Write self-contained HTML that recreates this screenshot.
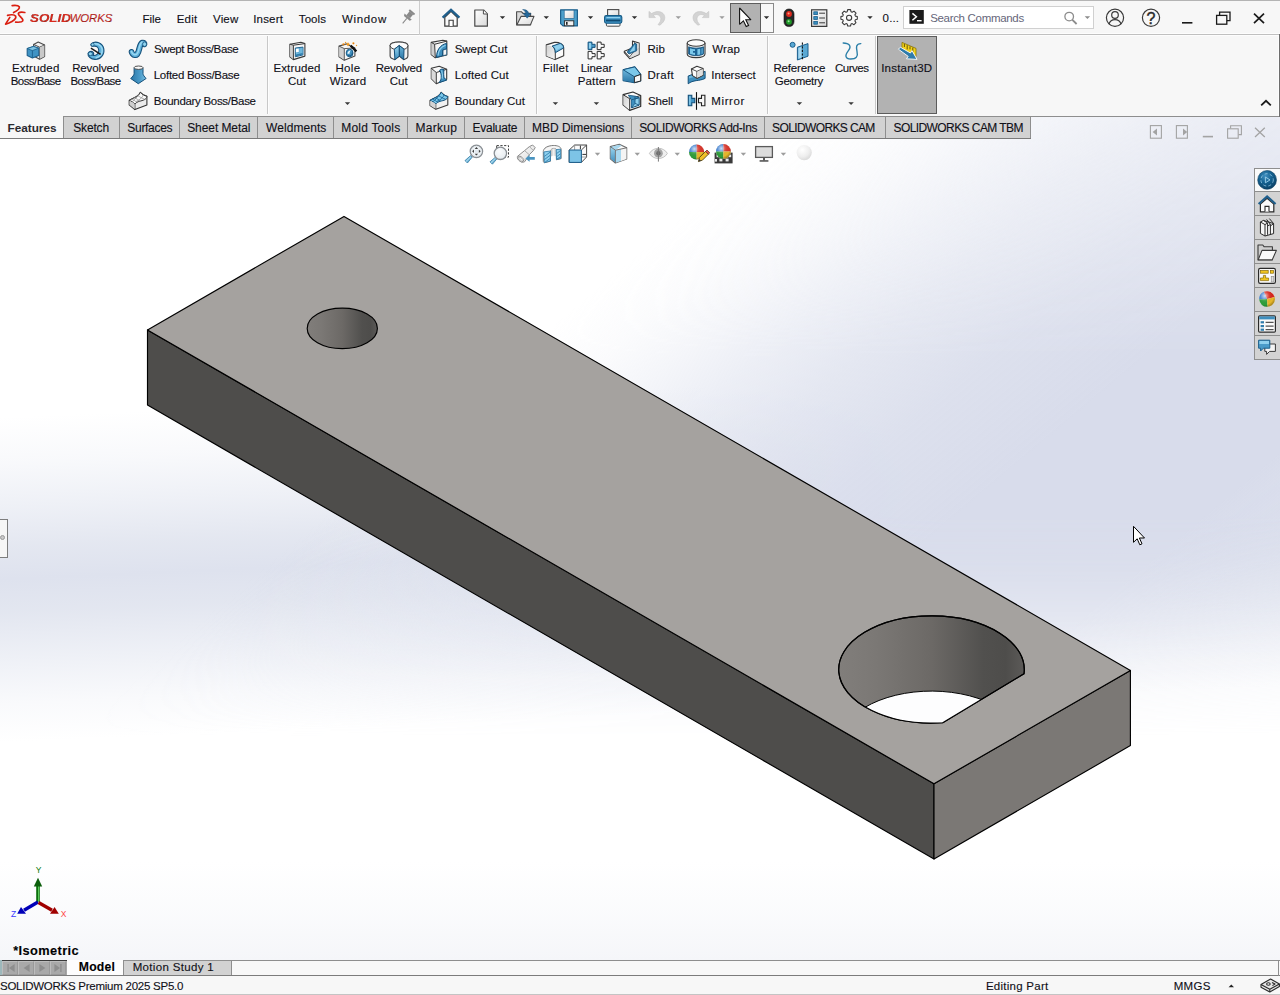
<!DOCTYPE html>
<html lang="en"><head><meta charset="utf-8"><title>SOLIDWORKS Premium 2025 SP5.0</title>
<style>
html,body{margin:0;padding:0}
body{width:1280px;height:995px;position:relative;overflow:hidden;background:#fff;
 font-family:"Liberation Sans",sans-serif;font-size:11.5px;color:#111}
.t{position:absolute;white-space:nowrap;line-height:14px;height:14px;color:#101018;-webkit-text-stroke:.12px #101018}
.a{position:absolute}
svg{position:absolute;overflow:visible}
#vp{position:absolute;left:0;top:117px;width:1280px;height:843px;overflow:hidden;background:#fff}
#bg1{position:absolute;left:0;top:0;width:1280px;height:843px;
 background:
  linear-gradient(to bottom, rgba(246,247,250,0) 745px, rgba(246,247,250,.55) 800px, rgba(245,246,249,1) 843px),
  linear-gradient(177.5deg, rgba(224,228,239,0) 300px, rgba(224,228,239,.22) 345px, rgba(224,228,239,.55) 390px, rgba(223,227,238,.85) 430px, rgba(222,226,238,1) 462px, rgba(223,227,238,.88) 495px, rgba(224,228,239,.55) 540px, rgba(224,228,239,.2) 585px, rgba(224,228,239,0) 625px),
  #fff}
#bg2{position:absolute;left:0;top:0;width:1280px;height:843px;
 background:linear-gradient(140deg, rgba(222,226,238,0) 515px, rgba(222,226,238,.12) 570px, rgba(222,226,238,.32) 620px, rgba(221,225,238,.54) 670px, rgba(220,224,237,.76) 735px, rgba(218,222,236,.93) 820px, rgba(216,220,235,1) 920px, rgba(216,220,235,1) 1080px, rgba(220,224,237,.8) 1200px, rgba(224,228,239,.6) 1300px);
 -webkit-mask-image:linear-gradient(to bottom, rgba(0,0,0,.62) 0px, rgba(0,0,0,.8) 120px, #000 240px, #000 400px, rgba(0,0,0,.6) 480px, rgba(0,0,0,.2) 560px, rgba(0,0,0,0) 620px);
 mask-image:linear-gradient(to bottom, rgba(0,0,0,.62) 0px, rgba(0,0,0,.8) 120px, #000 240px, #000 400px, rgba(0,0,0,.6) 480px, rgba(0,0,0,.2) 560px, rgba(0,0,0,0) 620px)}
#titlebar{left:0;top:0;width:1280px;height:34px;background:#f7f7f7;border-top:1px solid #b4b4b4;border-bottom:1px solid #fdfdfd;box-sizing:border-box}
#ribbon{left:0;top:34px;width:1280px;height:82px;background:#f7f7f7;border-top:1px solid #c0c0c0;box-sizing:border-box;box-shadow:inset 0 1px 0 #fdfdfd}
#ribline{left:0;top:116px;width:1280px;height:1px;background:#9a9a9a}
.vsep{position:absolute;width:1px;background:#c8c8c8;top:36px;height:78px;box-shadow:1px 0 0 #fdfdfd}
.tab{position:absolute;top:117px;height:21px;background:#d2d2d2;border-right:1px solid #9c9c9c;box-sizing:border-box}
#tabline{left:0;top:138px;width:1031px;height:1px;background:#7a7a7a}
.dd{position:absolute;width:0;height:0;border-left:3px solid transparent;border-right:3px solid transparent;border-top:3px solid #333}
.ddg{border-top-color:#9a9a9a}

</style></head>
<body>
<div id="vp">
<div id="bg1"></div><div id="bg2"></div>
<svg width="1280" height="995" viewBox="0 0 1280 995" style="left:0;top:-117px" shape-rendering="geometricPrecision">
<defs>
<linearGradient id="hg" x1="0" y1="0" x2="1" y2="0">
<stop offset="0" stop-color="#817e7b"/><stop offset=".2" stop-color="#7b7875"/><stop offset=".5" stop-color="#6c6966"/>
<stop offset=".78" stop-color="#51504e"/><stop offset=".9" stop-color="#4e4d4b"/><stop offset="1" stop-color="#5c5a58"/>
</linearGradient>
<clipPath id="dclip"><path d="M1024.0,673.8 A92.8,53.6 0 1 0 942.7,722.7 Z"/></clipPath>
</defs>
<g stroke="#000" stroke-width="1.15" stroke-linejoin="round">
<polygon points="147.5,329.9 934.0,783.8 934.0,859.0 147.5,405.1" fill="#4e4d4b"/>
<polygon points="934.0,783.8 1130.4,670.4 1130.4,745.6 934.0,859.0" fill="#7b7875"/>
<polygon points="344.0,216.4 1130.4,670.4 934.0,783.8 147.5,329.9" fill="#a5a29f"/>
<ellipse cx="342.3" cy="328.4" rx="35.1" ry="20.2" fill="url(#hg)"/>
<path d="M1024.0,673.8 A92.8,53.6 0 1 0 942.7,722.7 Z" fill="url(#hg)"/>
<g clip-path="url(#dclip)"><path d="M1024.0,749.0 A92.8,53.6 0 1 0 942.7,797.9 Z" fill="#fdfdfe" stroke-width="1"/></g>
<path d="M1024.0,673.8 A92.8,53.6 0 1 0 942.7,722.7 Z" fill="none"/>
</g>
<path d="M1133.5,526.3 L1133.5,542.3 L1137.2,538.8 L1139.8,544.8 L1142,543.8 L1139.4,538 L1144.5,538 Z" fill="#fff" stroke="#000" stroke-width="1" stroke-linejoin="miter" stroke-miterlimit="3"/>
<g>
<line x1="38" y1="902" x2="38" y2="886" stroke="#0b6e0b" stroke-width="3.6"/>
<line x1="38.6" y1="902" x2="38.6" y2="886" stroke="#5fd45f" stroke-width="1"/>
<polygon points="38,877.8 42.2,886.5 33.8,886.5" fill="#0b5e0b"/>
<line x1="38" y1="902" x2="24" y2="910.3" stroke="#0000b8" stroke-width="3.4"/>
<polygon points="17.2,913.8 21,907 26,913.8" fill="#0000b8"/>
<line x1="38.5" y1="902.5" x2="52" y2="910.3" stroke="#a00000" stroke-width="3.4"/>
<polygon points="58.8,913.8 54.6,907 50,913.8" fill="#a00000"/>
<text x="38.5" y="873" font-size="8.5" font-family="Liberation Sans, sans-serif" fill="#0a7a0a" text-anchor="middle">Y</text>
<text x="13.5" y="917" font-size="8.5" font-family="Liberation Sans, sans-serif" fill="#3a3aff" text-anchor="middle">Z</text>
<text x="63.6" y="917" font-size="8.5" font-family="Liberation Sans, sans-serif" fill="#ff4646" text-anchor="middle">X</text>
</g>
</svg>
</div>
<div class="a" id="titlebar"></div>
<div class="a" id="ribbon"></div>
<div class="a" style="left:419px;top:1px;width:1px;height:34px;background:#cdcdcd"></div>
<div class="a" style="left:730px;top:3px;width:31px;height:30px;background:#b2b2b2;border:1px solid #5c5c5c;box-sizing:border-box"></div>
<div class="a" style="left:761px;top:3px;width:13px;height:30px;background:#f8f8f8;border:1px solid #8a8a8a;border-left:none;box-sizing:border-box"></div>
<div class="a" style="left:903px;top:6px;width:191px;height:23px;background:#fff;border:1px solid #d0d0d0;box-sizing:border-box"></div>
<div class="vsep" style="left:267px"></div>
<div class="vsep" style="left:536px"></div>
<div class="vsep" style="left:767px"></div>
<div class="vsep" style="left:875px"></div>
<div class="a" style="left:877px;top:36px;width:60px;height:78px;background:#b2b2b2;border:1px solid #5c5c5c;box-sizing:border-box"></div>
<div class="a" style="left:63px;top:116px;width:1217px;height:1px;background:#8e8e8e"></div>
<div class="a" style="left:0;top:116px;width:63px;height:22px;background:#f7f7f7"></div>
<div class="tab" style="left:63px;width:57px;border-left:1px solid #8e8e8e;border-right:1px solid #8e8e8e;"></div>
<div class="tab" style="left:119px;width:61px;border-left:1px solid #8e8e8e;border-right:1px solid #8e8e8e;"></div>
<div class="tab" style="left:179px;width:79px;border-left:1px solid #8e8e8e;border-right:1px solid #8e8e8e;"></div>
<div class="tab" style="left:257px;width:77px;border-left:1px solid #8e8e8e;border-right:1px solid #8e8e8e;"></div>
<div class="tab" style="left:333px;width:75px;border-left:1px solid #8e8e8e;border-right:1px solid #8e8e8e;"></div>
<div class="tab" style="left:407px;width:58px;border-left:1px solid #8e8e8e;border-right:1px solid #8e8e8e;"></div>
<div class="tab" style="left:464px;width:61px;border-left:1px solid #8e8e8e;border-right:1px solid #8e8e8e;"></div>
<div class="tab" style="left:524px;width:108px;border-left:1px solid #8e8e8e;border-right:1px solid #8e8e8e;"></div>
<div class="tab" style="left:631px;width:134px;border-left:1px solid #8e8e8e;border-right:1px solid #8e8e8e;"></div>
<div class="tab" style="left:764px;width:122px;border-left:1px solid #8e8e8e;border-right:1px solid #8e8e8e;"></div>
<div class="tab" style="left:885px;width:146px;border-left:1px solid #8e8e8e;border-right:1px solid #8e8e8e;"></div>
<div class="a" id="tabline"></div>
<div class="a" style="left:1278px;top:35px;width:1px;height:81px;background:#fdfdfd"></div>
<div class="a" style="left:1279px;top:34px;width:1px;height:83px;background:#6e6e6e"></div>
<div class="a" style="left:1278px;top:960px;width:1px;height:16px;background:#8e8e8e;z-index:2"></div>
<div class="a" style="left:-1px;top:519px;width:9px;height:39px;background:#f6f6f6;border:1px solid #7d7d7d;box-sizing:border-box"></div>
<div class="a" style="left:0px;top:535px;width:5px;height:5px;border-radius:50%;background:#c8c8c8;border:1px solid #9a9a9a;box-sizing:border-box"></div>
<div class="a" style="left:1254px;top:168px;width:26px;height:192px;background:#d3d3d3;border:1px solid #8e8e8e;border-right:none;box-sizing:border-box"></div>
<div class="a" style="left:1255px;top:169px;width:25px;height:22px;background:#fafafa"></div>
<div class="a" style="left:1254px;top:191px;width:26px;height:1px;background:#8e8e8e"></div>
<div class="a" style="left:1254px;top:215px;width:26px;height:1px;background:#8e8e8e"></div>
<div class="a" style="left:1254px;top:239px;width:26px;height:1px;background:#8e8e8e"></div>
<div class="a" style="left:1254px;top:263px;width:26px;height:1px;background:#8e8e8e"></div>
<div class="a" style="left:1254px;top:287px;width:26px;height:1px;background:#8e8e8e"></div>
<div class="a" style="left:1254px;top:311px;width:26px;height:1px;background:#8e8e8e"></div>
<div class="a" style="left:1254px;top:335px;width:26px;height:1px;background:#8e8e8e"></div>
<div class="a" style="left:0;top:960px;width:1280px;height:16px;background:#f8f8f8"></div>
<div class="a" style="left:0;top:960px;width:1280px;height:1px;background:#8e8e8e"></div>
<div class="a" style="left:0;top:960px;width:2px;height:15px;background:#9db8bb"></div>
<div class="a" style="left:2px;top:960px;width:65px;height:15px;background:#a9a9a9;border-top:1px solid #3a3a3a;box-sizing:border-box"></div>
<div class="a" style="left:2px;top:961px;width:16px;height:14px;border:1px solid #bdbdbd;border-right-color:#9a9a9a;border-bottom-color:#9a9a9a;box-sizing:border-box"></div>
<div class="a" style="left:18px;top:961px;width:16px;height:14px;border:1px solid #bdbdbd;border-right-color:#9a9a9a;border-bottom-color:#9a9a9a;box-sizing:border-box"></div>
<div class="a" style="left:34px;top:961px;width:16px;height:14px;border:1px solid #bdbdbd;border-right-color:#9a9a9a;border-bottom-color:#9a9a9a;box-sizing:border-box"></div>
<div class="a" style="left:50px;top:961px;width:16px;height:14px;border:1px solid #bdbdbd;border-right-color:#9a9a9a;border-bottom-color:#9a9a9a;box-sizing:border-box"></div>
<div class="a" style="left:67px;top:960px;width:56px;height:15px;background:#fdfdfd"></div>
<div class="a" style="left:123px;top:960px;width:109px;height:15px;background:#d2d2d2;border:1px solid #8e8e8e;border-bottom:none;box-sizing:border-box"></div>
<div class="a" style="left:0;top:975px;width:1280px;height:1px;background:#7c7c7c"></div>
<div class="a" style="left:0;top:976px;width:1280px;height:19px;background:#f7f7f7;border-bottom:1px solid #c4c4c4;box-sizing:border-box"></div>
<svg width="1280" height="995" viewBox="0 0 1280 995" style="left:0;top:0">
<defs>
<linearGradient id="gPaper" x1="0" y1="0" x2="1" y2="1"><stop offset="0" stop-color="#ffffff"/><stop offset="1" stop-color="#d9d9d9"/></linearGradient>
<radialGradient id="gSphere" cx=".38" cy=".32" r=".75"><stop offset="0" stop-color="#ffffff"/><stop offset=".6" stop-color="#eeeeee"/><stop offset="1" stop-color="#d6d6d6"/></radialGradient>
<radialGradient id="gCompass" cx=".4" cy=".3" r=".8"><stop offset="0" stop-color="#3f8fc0"/><stop offset=".45" stop-color="#14608f"/><stop offset="1" stop-color="#0a3a5c"/></radialGradient>
<linearGradient id="gBlueV" x1="0" y1="0" x2="0" y2="1"><stop offset="0" stop-color="#9ad6f0"/><stop offset="1" stop-color="#3f8fbe"/></linearGradient>
<linearGradient id="gBlueV2" x1="0" y1="0" x2="0" y2="1"><stop offset="0" stop-color="#6fb7dc"/><stop offset="1" stop-color="#2a76a6"/></linearGradient>
<linearGradient id="gGrayD" x1="0" y1="0" x2="1" y2="1"><stop offset="0" stop-color="#d0d0d0"/><stop offset="1" stop-color="#f6f6f6"/></linearGradient>
<linearGradient id="gLoft" x1="0" y1="0" x2="1" y2="0"><stop offset="0" stop-color="#2a76a6"/><stop offset=".6" stop-color="#4a9bc9"/><stop offset="1" stop-color="#7cc0e2"/></linearGradient>
<radialGradient id="gGloss" cx=".36" cy=".3" r=".78"><stop offset="0" stop-color="#fff" stop-opacity=".75"/><stop offset=".35" stop-color="#fff" stop-opacity=".12"/><stop offset=".7" stop-color="#000" stop-opacity="0"/><stop offset="1" stop-color="#000" stop-opacity=".38"/></radialGradient>
<radialGradient id="gLens" cx=".4" cy=".35" r=".8"><stop offset="0" stop-color="#fbfcfd"/><stop offset=".7" stop-color="#e9eef2"/><stop offset="1" stop-color="#d2dbe2"/></radialGradient>
<linearGradient id="gCav" x1="0" y1="0" x2="1" y2="0"><stop offset="0" stop-color="#b4b4b4"/><stop offset=".5" stop-color="#f0f0f0"/><stop offset="1" stop-color="#c8c8c8"/></linearGradient>
</defs>

<!-- ===== title bar ===== -->
<!-- DS logo + SOLIDWORKS -->
<g fill="none" stroke="#da1e10" stroke-width="1.7" stroke-linecap="round" stroke-linejoin="round">
<path d="M12.2,5.6 C15,5.3 18.4,5.5 19.3,6.7 C19.8,8.4 17.4,10.6 13.6,12.5"/>
<path d="M7.6,15.4 C10,14.5 14.4,14.3 15.7,16.2 C16.7,18.2 14,21 8.4,23.2 L5.6,24.1 L9.8,17.4"/>
<path d="M24.8,12.5 C22.8,12.1 20,11.9 18.7,12.9 C17.5,14 19.4,15.6 21.3,17.6 C23.3,19.6 23.5,21 21.5,21.8 C20,22.3 17.4,22.3 15.6,22.1"/>
</g>
<!-- pin -->
<g transform="translate(407.5,17.5) rotate(40) scale(1.08)" fill="#8a8a8a">
<rect x="-3.2" y="-7.2" width="6.4" height="1.8"/><rect x="-2.2" y="-5.6" width="4.4" height="4.6"/>
<path d="M-4.4,-1 H4.4 L3.4,1 H-3.4 Z"/><rect x="-0.5" y="1" width="1" height="6"/>
</g>
<!-- home -->
<g>
<path d="M444.8,17.2 V26.2 H457.2 V17.2 L451,11.2 Z" fill="#fafafa" stroke="#3a3a3a" stroke-width="1.2"/>
<path d="M449,26 V20.2 H453.2 V26" fill="#fff" stroke="#3a3a3a" stroke-width="1.1"/>
<path d="M442.6,17.6 L451,9.8 L459.4,17.6" fill="none" stroke="#1f5f8c" stroke-width="2.3" stroke-linejoin="miter"/>
</g>
<!-- new doc -->
<g>
<path d="M474.8,10 H483.6 L487.4,13.8 V26.2 H474.8 Z" fill="url(#gPaper)" stroke="#4a4a4a" stroke-width="1.2" stroke-linejoin="round"/>
<path d="M483.4,10.2 V14 H487.2" fill="#fff" stroke="#4a4a4a" stroke-width="1"/>
</g>
<!-- open -->
<g>
<path d="M516.6,11.8 H521.6 L523,13.4 H530.6 V24.8 H516.6 Z" fill="#d9d9d9" stroke="#4a4a4a" stroke-width="1.1" stroke-linejoin="round"/>
<path d="M521,16.4 H534 L530.4,24.9 H516.8 Z" fill="url(#gPaper)" stroke="#4a4a4a" stroke-width="1.1" stroke-linejoin="round"/>
<path d="M522.6,9.6 C526.4,9.4 528.4,11 528.6,13.6 H531 L527.2,18.2 L523.2,13.6 H525.8 C525.6,11.8 524.6,10.6 522.6,9.6 Z" fill="#25689a" stroke="#1c5580" stroke-width=".5"/>
</g>
<!-- save -->
<g>
<path d="M560.6,9.8 H577.4 V25.9 H563 L560.6,23.6 Z" fill="#4d9fcb" stroke="#1c5f8c" stroke-width="1.2" stroke-linejoin="round"/>
<rect x="564.2" y="10.2" width="9.8" height="8.2" fill="url(#gPaper)" stroke="#1c5f8c" stroke-width=".6"/>
<rect x="564.4" y="20.8" width="9.4" height="5" fill="#f2f2f2" stroke="#2a2a2a" stroke-width=".9"/>
<rect x="566" y="22" width="1.6" height="2.8" fill="#222"/>
</g>
<!-- print -->
<g>
<rect x="607.6" y="9.6" width="11.2" height="7" fill="url(#gPaper)" stroke="#4a4a4a" stroke-width="1.1"/>
<rect x="606.4" y="22.4" width="13.6" height="3.8" rx="1" fill="#fafafa" stroke="#4a4a4a" stroke-width="1"/>
<rect x="604.6" y="15.6" width="17.2" height="7.6" rx="1.6" fill="#3f93c4" stroke="#155a85" stroke-width="1.1"/>
<rect x="606" y="19.6" width="14.4" height="1.8" fill="#0f4a72"/>
<rect x="606.4" y="17" width="13.6" height="1.2" fill="#8fd0ee"/>
</g>
<!-- undo / redo (disabled) -->
<path d="M649,11.4 V17.6 H655.4 L653.4,15.4 C656.6,13.4 660.4,15 660.8,18.4 C661,20.8 659.8,22.6 658,24.6 L659.8,25.2 C663.4,22.6 665.4,19.6 664.6,16.2 C663.6,11.8 657.6,9.8 651.6,13.6 Z" fill="#d3d3d3" stroke="#c4c4c4" stroke-width=".6"/>
<path d="M708.8,11.4 V17.6 H702.4 L704.4,15.4 C701.2,13.4 697.4,15 697,18.4 C696.8,20.8 698,22.6 699.8,24.6 L698,25.2 C694.4,22.6 692.4,19.6 693.2,16.2 C694.2,11.8 700.2,9.8 706.2,13.6 Z" fill="#d3d3d3" stroke="#c4c4c4" stroke-width=".6"/>
<!-- select cursor -->
<path d="M739.6,8 V24.4 L743.4,20.8 L746.2,26.6 L748.6,25.5 L745.8,19.8 H751 Z" fill="#fff" stroke="#111" stroke-width="1.1" stroke-linejoin="miter" stroke-miterlimit="2.5"/>
<!-- traffic light -->
<g>
<rect x="784" y="9" width="10" height="17.6" rx="4.8" fill="#262626" stroke="#111" stroke-width=".6"/>
<circle cx="789" cy="14" r="2.9" fill="#e02a1e"/><circle cx="788.6" cy="13.4" r="1" fill="#ff9a8a"/>
<circle cx="789" cy="21.8" r="2.9" fill="#1f9a28"/><circle cx="788.6" cy="21.2" r="1" fill="#9be89a"/>
</g>
<!-- options list -->
<g>
<rect x="811.6" y="9.8" width="15.2" height="16.6" fill="url(#gPaper)" stroke="#3a3a3a" stroke-width="1.2"/>
<g fill="#3a8fc0" stroke="#1c5f8c" stroke-width=".8"><rect x="813.8" y="11.8" width="3.6" height="2.8"/><rect x="813.8" y="16.6" width="3.6" height="2.8"/><rect x="813.8" y="21.4" width="3.6" height="2.8"/></g>
<g stroke="#3a3a3a" stroke-width="1"><line x1="819.2" y1="13.2" x2="825" y2="13.2"/><line x1="819.2" y1="18" x2="825" y2="18"/><line x1="819.2" y1="22.8" x2="825" y2="22.8"/></g>
</g>
<!-- gear -->
<g transform="translate(849.1,17.8)" fill="#fbfbfb" stroke="#3a3a3a" stroke-width="1.1" stroke-linejoin="round">
<path d="M-1.4,-7.8 H1.4 L1.9,-5.7 L3.1,-5.2 L4.9,-6.3 L6.9,-4.3 L5.8,-2.5 L6.3,-1.3 L8.2,-0.9 V1.9 L6.3,2.3 L5.8,3.5 L6.9,5.3 L4.9,7.3 L3.1,6.2 L1.9,6.7 L1.4,8.6 H-1.4 L-1.9,6.7 L-3.1,6.2 L-4.9,7.3 L-6.9,5.3 L-5.8,3.5 L-6.3,2.3 L-8.2,1.9 V-0.9 L-6.3,-1.3 L-5.8,-2.5 L-6.9,-4.3 L-4.9,-6.3 L-3.1,-5.2 L-1.9,-5.7 Z" transform="translate(0,-0.4)"/>
<circle cx="0" cy="0" r="2.6" fill="#f7f7f7"/>
</g>
<!-- search prompt icon -->
<rect x="909.4" y="10" width="14.4" height="13.8" fill="#1b1b1b"/>
<path d="M912.4,13.4 L916.4,16.8 L912.4,20.2" fill="none" stroke="#fff" stroke-width="1.5"/>
<rect x="917" y="20" width="4.6" height="1.4" fill="#fff"/>
<!-- magnifier -->
<circle cx="1069.2" cy="16.6" r="4.3" fill="none" stroke="#8c8c8c" stroke-width="1.3"/>
<line x1="1072.4" y1="19.8" x2="1076.6" y2="24" stroke="#8c8c8c" stroke-width="1.8"/>
<!-- user -->
<g fill="none" stroke="#3a3a3a" stroke-width="1.2">
<circle cx="1115" cy="17.8" r="8.6"/><circle cx="1115" cy="15" r="3.3"/>
<path d="M1109,24 C1110,20.6 1112.4,19.6 1115,19.6 C1117.6,19.6 1120,20.6 1121,24"/>
</g>
<!-- help -->
<circle cx="1151" cy="17.8" r="8.6" fill="none" stroke="#3a3a3a" stroke-width="1.2"/>
<text x="1151" y="23.6" font-family="Liberation Sans, sans-serif" font-size="16" fill="#2a2a2a" stroke="#2a2a2a" stroke-width=".45" text-anchor="middle">?</text>
<!-- window buttons -->
<rect x="1182" y="22" width="10.4" height="1.6" fill="#1a1a1a"/>
<g fill="none" stroke="#1a1a1a" stroke-width="1.3">
<path d="M1219.6,15.2 V12.2 H1230 V20.6 H1227"/><rect x="1216.6" y="15.4" width="10.2" height="8.8" fill="#f7f7f7"/>
</g>
<path d="M1254,13.6 L1264,23.2 M1264,13.6 L1254,23.2" stroke="#1a1a1a" stroke-width="1.7" fill="none"/>
<!-- ribbon collapse chevron -->
<path d="M1261.2,105.4 L1266,100.8 L1270.8,105.4" fill="none" stroke="#1a1a1a" stroke-width="1.8"/>
<!-- MDI buttons (grey) -->
<g fill="none" stroke="#a3a3a3" stroke-width="1.1">
<rect x="1150.4" y="125.6" width="11" height="12.6"/><rect x="1176.4" y="125.6" width="11" height="12.6"/>
<path d="M1230.6,128.6 V125.8 H1241.4 V134.6 H1238.4"/><rect x="1227.6" y="128.8" width="10.6" height="9.4"/>
</g>
<path d="M1157,128.6 V135.4 L1152.6,132 Z" fill="#a3a3a3"/><path d="M1183,128.6 V135.4 L1187.2,132 Z" fill="#a3a3a3"/>
<rect x="1202.8" y="135.8" width="10.2" height="1.6" fill="#a3a3a3"/>
<path d="M1255,127.8 L1264.8,137 M1264.8,127.8 L1255,137" stroke="#a3a3a3" stroke-width="1.3" fill="none"/>

<!-- ===== ribbon icons ===== -->
<!-- Extruded Boss/Base -->
<g stroke-linejoin="round">
<path d="M33.6,44.4 L38.2,42 L44.6,45 V56.6 L39.6,59.2 L33.6,56 Z" fill="#f2f2f2" stroke="#4a4a4a" stroke-width="1.1"/>
<path d="M39.6,47.2 V59.2 M39.6,47.2 L44.6,45 M39.6,47.2 L33.6,44.4" fill="none" stroke="#4a4a4a" stroke-width="1"/>
<path d="M39.6,47.4 L44.4,45.2 V56.4 L39.8,58.8 Z" fill="#c9c9c9"/>
<path d="M27.2,48.6 L33.4,46.4 L38.8,48.2 V55.4 L32.4,58 L27.2,55.6 Z" fill="#3f93c4" stroke="#1c5f8c" stroke-width="1.1"/>
<path d="M27.2,48.6 L32.4,50.6 L38.8,48.2 L33.4,46.4 Z" fill="#7ec3e3" stroke="#1c5f8c" stroke-width=".8"/>
<path d="M32.4,50.6 V58" stroke="#1c5f8c" stroke-width=".9" fill="none"/>
</g>
<!-- Revolved Boss/Base -->
<g>
<path d="M91.4,43.6 C95.6,40.6 102.6,42.6 103.8,48.8 C104.8,54.8 100.4,59.6 95,59.4 C91,59.2 87.6,56.6 88,53.6 C88.4,51.2 91.6,50.6 93.2,52.4 C94,53.6 93.6,54.8 92.8,55.4 C96.2,56 98.8,53.6 98.8,50.4 C98.6,47.4 96.4,45.6 93.8,46.2 C91.4,46.6 90,45 91.4,43.6 Z" fill="#5fb2dc" stroke="#14507a" stroke-width="1.1" stroke-linejoin="round"/>
<path d="M93.6,44 C97.2,43 101.4,45 102.2,49.2 C102.8,53.4 100,57 96.2,57.8" fill="none" stroke="#9ad8f2" stroke-width="1.5" stroke-linecap="round"/>
<ellipse cx="90.4" cy="53.8" rx="2.1" ry="1.9" fill="#8fd4f0" stroke="#14507a" stroke-width=".8"/>
<ellipse cx="92.6" cy="44.6" rx="1.5" ry="1.5" fill="#8fd4f0" stroke="#14507a" stroke-width=".7"/>
<line x1="90.9" y1="48.2" x2="100.6" y2="54.4" stroke="#1a1a1a" stroke-width="1.5"/>
</g>
<!-- Swept Boss/Base -->
<g>
<path d="M129.6,50.4 C131,48.8 133.2,49.4 133.8,51.4 C134.4,53 135.4,53 136.2,50.6 C137.6,46.4 137.6,41.6 141.8,40.4 C144.8,39.8 147.2,41.6 146.8,44.4 C146.4,46.8 143.6,47.4 142.6,45.8 C141.8,47.6 141.6,52.4 139,55.8 C136.8,58.4 132.8,58 130.8,55.4 C129.6,53.8 128.8,51.6 129.6,50.4 Z" fill="#5fb2dc" stroke="#14507a" stroke-width="1.1" stroke-linejoin="round"/>
<path d="M131.4,51.4 C132.6,55.2 136.4,56.2 138,52.2 C139.4,48.6 139.4,43.4 142,42" fill="none" stroke="#9ad8f2" stroke-width="1.5" stroke-linecap="round"/>
<ellipse cx="144.6" cy="44.2" rx="2" ry="2.3" fill="#8fd4f0" stroke="#14507a" stroke-width=".8"/>
</g>
<!-- Lofted Boss/Base -->
<g>
<path d="M134.1,67.8 V73.6 C134.1,75 132.6,76.6 130.7,78.5 L138.3,83.7 L146.1,78.5 C144.4,76.6 143,75 143,73.6 V67.8 Z" fill="url(#gLoft)" stroke="#14507a" stroke-width="1" stroke-linejoin="round"/>
<ellipse cx="138.55" cy="67.7" rx="4.45" ry="1.7" fill="#fafafa" stroke="#3a3a3a" stroke-width=".9"/>
</g>
<!-- Boundary Boss/Base -->
<g stroke-linejoin="round">
<path d="M129.2,100.4 C133.2,97.6 137.8,97.8 140.4,92.3 C142.2,94.6 144.6,95.8 146.9,96.2 V105.1 L134.9,109.6 L129.2,104.9 Z" fill="#ebebeb" stroke="#333" stroke-width="1.1"/>
<path d="M129.2,100.4 C133.2,97.6 137.8,97.8 140.4,92.3 C142.2,94.6 144.6,95.8 146.9,96.2 C146.6,99.8 142.6,100.4 139.8,101.2 C137.6,101.8 136,102.6 134.9,104 C133.2,102.2 131.2,101 129.2,100.4 Z" fill="#fbfbfb" stroke="#333" stroke-width="1"/>
<path d="M131.4,98.9 C133.4,99.8 135.4,101 137,102.4 M134,97.6 C136.2,98.4 138.4,99.8 140,101.2 M137.8,95.6 C139.8,97 142.6,98.6 144.8,99.2 M139,94 C136.6,98 134,100.4 132,101.8 M143.4,94.6 C142.6,97.6 139.2,100.2 136.2,101.4" fill="none" stroke="#8a8a8a" stroke-width=".7"/>
<path d="M134.9,104 V109.6" fill="none" stroke="#333" stroke-width="1"/>
<path d="M129.5,101 C131.2,101.4 133.2,102.6 134.6,104.2 V109 L129.5,104.8 Z" fill="#cfcfcf"/>
</g>
<!-- Extruded Cut -->
<g stroke-linejoin="round">
<path d="M289.9,44.2 L300.9,42.3 L304.9,43.6 V56.1 L293.4,59.6 L289.9,56.8 Z" fill="#f6f6f6" stroke="#3a3a3a" stroke-width="1.1"/>
<path d="M290.1,44.6 L293.2,45.5 V59.2 L290.1,56.6 Z" fill="#cfcfcf"/>
<path d="M289.9,44.2 L293.4,45.2 V59.6 M293.4,45.2 L304.9,43.6" fill="none" stroke="#3a3a3a" stroke-width="1"/>
<path d="M295.3,48 L303,47.1 V54.9 L295.3,56.8 Z" fill="#4a9bc9" stroke="#1c5f8c" stroke-width=".9"/>
<path d="M295.9,48.7 L298.8,48.4 V52 L295.9,52.6 Z" fill="#ffffff"/>
<path d="M296,53 L299.2,52.4 V48.4 L302.6,47.8 V54.4 L296,56 Z" fill="#6fb7dc"/>
<path d="M296,54.6 L302.6,53 V54.6 L296,56.2 Z" fill="#2f7cab"/>
</g>
<!-- Hole Wizard -->
<g stroke-linejoin="round">
<path d="M339,46.1 L346.5,43.9 L354.9,48 V56.1 L344.3,60.2 L339,56.8 Z" fill="#f6f6f6" stroke="#4a4a4a" stroke-width="1.1"/>
<path d="M339.2,46.5 L344.1,48.8 V59.8 L339.2,56.6 Z" fill="#d2d2d2"/>
<path d="M339,46.1 L344.3,48.6 V60.2 M344.3,48.6 L354.9,48" fill="none" stroke="#4a4a4a" stroke-width=".9"/>
<ellipse cx="349.6" cy="53" rx="3.4" ry="3.8" fill="#3f8fbe" stroke="#1c5f8c" stroke-width="1"/>
<path d="M347.4,53.8 C347.4,51.4 349,50.2 351,50.4 C350,51 349.4,52.4 349.6,53.8 Z" fill="#eaf6fc"/>
<path d="M348.2,55.6 C350.4,56.6 352.4,55 352.4,52.6" fill="none" stroke="#14507a" stroke-width="1"/>
<line x1="350.6" y1="45.6" x2="356.4" y2="51.4" stroke="#111" stroke-width="2.3"/>
<g fill="#f39a1e"><path d="M348,42.2 L348.9,43.6 L350.4,44.2 L348.9,44.9 L348,46.4 L347.1,44.9 L345.6,44.2 L347.1,43.6 Z"/><circle cx="343.4" cy="44.3" r="1.1"/><circle cx="353.4" cy="43.3" r="1.1"/><circle cx="356.5" cy="45.5" r=".7"/><circle cx="345.6" cy="42.4" r=".7"/></g>
<g fill="#c64a12"><circle cx="343.4" cy="44.3" r=".45"/><circle cx="353.4" cy="43.3" r=".45"/></g>
</g>
<!-- Revolved Cut -->
<g stroke-linejoin="round">
<path d="M390.1,45.5 C390.1,40.9 407.9,40.9 407.9,45.5 V56.1 C407.9,57.8 406,59 403.7,59.6 L399.4,56.1 L394.9,59.6 C392.4,59 390.1,57.8 390.1,56.1 Z" fill="#f1f1f1" stroke="#3f3f3f" stroke-width="1.1"/>
<path d="M390.1,45.5 C390.1,48 393.6,49 394.3,49.2 L399.3,45.5 L404,49.2 C405.4,49 407.9,48 407.9,45.5 C407.9,40.9 390.1,40.9 390.1,45.5 Z" fill="#fcfcfc" stroke="#3f3f3f" stroke-width="1"/>
<path d="M394.3,49.25 L399.3,45.5 V56.1 L394.9,59.6 Z" fill="url(#gBlueV)" stroke="#14507a" stroke-width="1"/>
<path d="M399.3,45.5 L404,49.25 L403.7,59.6 L399.5,56.1 Z" fill="url(#gBlueV2)" stroke="#14507a" stroke-width="1"/>
</g>
<!-- Swept Cut -->
<g stroke-linejoin="round">
<path d="M431.2,42.4 L442.8,40.2 L446.8,41.1 V54.9 L435.3,57.7 L431.2,54.6 Z" fill="#f6f6f6" stroke="#3a3a3a" stroke-width="1.1"/>
<path d="M431.4,42.8 L434.5,44.5 L435.1,57.3 L431.4,54.4 Z" fill="#cfcfcf"/>
<path d="M431.2,42.4 L434.6,44.25 L435.3,57.7 M434.6,44.25 L446.8,41.1" fill="none" stroke="#3a3a3a" stroke-width="1"/>
<path d="M436.5,57.4 C436.5,50 440.4,44.6 446.6,43.4 V48.9 L442.8,49.9 L442.4,55.9 Z" fill="#3f8fbe" stroke="#14507a" stroke-width="1"/>
<path d="M438,55.6 C438.4,50.6 441.4,46.6 445.6,45.2" fill="none" stroke="#8fd0ee" stroke-width="1.1"/>
<path d="M443,50 L446.7,49 V54.8 L443,55.7 Z" fill="#f4f4f4" stroke="#14507a" stroke-width=".8"/>
</g>
<!-- Lofted Cut -->
<g stroke-linejoin="round">
<path d="M431.3,68.3 L439.2,66.2 L446.7,69.3 V79.3 L436.3,83.7 L431.3,78.7 Z" fill="#f8f8f8" stroke="#3a3a3a" stroke-width="1.1"/>
<path d="M431.5,68.8 L436.1,72.7 V83.2 L431.5,78.5 Z" fill="#dadada"/>
<path d="M431.3,68.3 L436.3,72.5 V83.7 M436.3,72.5 L446.7,69.3" fill="none" stroke="#3a3a3a" stroke-width="1"/>
<path d="M439.6,70.2 C440.6,69 442.8,68.8 443.9,69.6 C443.6,73 443.6,76 444.2,77.8 C445,78.8 446,79.6 446.6,80.2 L439.2,82.6 C440.6,80.6 441.2,79 441.2,77.4 C441.4,75 440.8,72.4 439.6,70.2 Z" fill="#3f8fbe" stroke="#14507a" stroke-width="1"/>
<path d="M441.6,70.4 C442.4,73 442.6,76.4 442.2,78.6" fill="none" stroke="#8fd0ee" stroke-width="1.1"/>
</g>
<!-- Boundary Cut -->
<g stroke-linejoin="round">
<path d="M430,100.4 C434,97.6 438.6,97.8 441.2,92.3 C443,94.6 445.4,96 447.8,96.5 V104.9 L435.8,109.3 L430,105.6 Z" fill="#f1f1f1" stroke="#3a3a3a" stroke-width="1.1"/>
<path d="M430,100.4 C434,97.6 438.6,97.8 441.2,92.3 C443,94.6 445.4,96 447.8,96.5 C447.4,100 443.4,100.4 440.6,101.2 C438.4,101.8 436.8,102.6 435.8,103.9 C434,102.2 432,101 430,100.4 Z" fill="#7cc8ea" stroke="#14507a" stroke-width="1"/>
<path d="M432.2,98.9 C434.2,99.8 436.2,101 437.8,102.4 M434.8,97.6 C437,98.4 439.2,99.8 440.8,101.2 M438.6,95.6 C440.6,97 443.4,98.6 445.6,99.2 M439.8,94 C437.4,98 434.8,100.4 432.8,101.8 M444.2,94.6 C443.4,97.6 440,100.2 437,101.4" fill="none" stroke="#1c6a9c" stroke-width=".9"/>
<path d="M435.8,103.9 V109.3" fill="none" stroke="#3a3a3a" stroke-width="1"/>
<path d="M430.3,101 C432,101.4 434,102.6 435.5,104.2 V108.8 L430.3,105.4 Z" fill="#d4d4d4"/>
</g>
<!-- Fillet -->
<g stroke-linejoin="round">
<path d="M546.3,44.9 L554.4,42.4 C557,42.2 559.4,42.8 560.6,43.6 C562.6,44.6 563.6,46.2 563.7,48 V55.8 L555,59.6 L546.3,56.1 Z" fill="#fbfbfb" stroke="#3a3a3a" stroke-width="1.1"/>
<path d="M546.5,45.3 L552.2,46.3 C554.2,47.8 555.2,50 555.2,52.8 V59.2 L546.5,55.9 Z" fill="url(#gGrayD)"/>
<path d="M552.2,46.1 C554.4,47.6 555.4,50 555.3,52.7 V59.6" fill="none" stroke="#3a3a3a" stroke-width="1"/>
<path d="M552.2,46.1 L560.3,43.3 C562.4,44.2 563.6,46 563.6,48 L555.3,52.7 C555.4,50 554.4,47.6 552.2,46.1 Z" fill="#6fb7dc" stroke="#14507a" stroke-width="1"/>
<path d="M553.8,46.4 L560.2,44.2 C561.6,44.8 562.4,45.8 562.6,47 L556,50.6 C555.8,49 555,47.4 553.8,46.4 Z" fill="#8fd0ee"/>
</g>
<!-- Linear Pattern -->
<g stroke-width=".95" stroke-linejoin="miter">
<path d="M0,0 H3.9 V2.2 H7 V5.3 H3.9 V7.5 H0 Z" transform="translate(588.1,42.1)" fill="#4a9bc9" stroke="#14507a"/>
<path d="M589,43 H591 V48.6 H589 Z" fill="#8fd0ee"/>
<path d="M0,0 H3.9 V2.2 H7 V5.3 H3.9 V7.5 H0 Z" transform="translate(597.2,42.1)" fill="#fbfbfb" stroke="#222"/>
<path d="M0,0 H3.9 V2.2 H7 V5.3 H3.9 V7.5 H0 Z" transform="translate(588.1,51.4)" fill="#fbfbfb" stroke="#222"/>
<path d="M0,0 H3.9 V2.2 H7 V5.3 H3.9 V7.5 H0 Z" transform="translate(597.2,51.4)" fill="#fbfbfb" stroke="#222"/>
</g>
<!-- Rib -->
<g stroke-linejoin="round">
<path d="M632.5,41.1 L639.1,43 V54.4 L629.7,58.7 L624.3,52.6 V51.3 L632.5,48 Z" fill="#f6f6f6" stroke="#3a3a3a" stroke-width="1.1"/>
<path d="M634.6,42.2 V50.6 L629.6,57 L624.3,51.3 M634.6,50.6 L639,48.6" fill="none" stroke="#3a3a3a" stroke-width=".8"/>
<path d="M634.9,42.6 L638.9,43.6 V54.2 L630,58.2 L629.8,57.4 L634.9,51 Z" fill="#dcdcdc" opacity=".8"/>
<path d="M634.8,43.2 L636.6,44 V50.8 L629,54 L627.2,52 Z" fill="#2f7cab" stroke="#14507a" stroke-width=".8"/>
<path d="M634.8,44.6 V50.4 L629.4,52.4 Z" fill="#8fd0ee"/>
</g>
<!-- Draft -->
<g stroke-linejoin="round">
<path d="M623.1,69.7 L634.8,66.9 L640.7,74.4 V81 L634.4,82.6 L623.1,80.6 Z" fill="#3f8fbe" stroke="#14507a" stroke-width="1.1"/>
<path d="M623.1,69.7 L634.4,76.7 V82.6 L623.1,80.6 Z" fill="url(#gBlueV2)"/>
<path d="M623.1,69.7 L634.8,66.9 L640.7,74.4 L634.4,76.7 Z" fill="#7cc8ea" stroke="#14507a" stroke-width=".9"/>
<path d="M634.4,76.7 L640.7,74.4 V81 L634.4,82.6 Z" fill="#f8f8f8" stroke="#2a2a2a" stroke-width="1"/>
</g>
<!-- Shell -->
<g stroke-linejoin="round">
<path d="M623.1,94.7 L632.9,92 L640.7,95.5 V106.5 L629.7,110.4 L623.1,104.9 Z" fill="#fbfbfb" stroke="#2f2f2f" stroke-width="1.2"/>
<path d="M623.4,95.3 L629.5,99 V109.9 L623.4,104.7 Z" fill="url(#gGrayD)"/>
<path d="M623.1,94.7 L629.7,98.7 V110.4 M629.7,98.7 L640.7,95.5" fill="none" stroke="#2f2f2f" stroke-width="1"/>
<path d="M631.4,100 L639.2,97.6 V105.2 L631.4,107.8 Z" fill="#8fd0ee" stroke="#14507a" stroke-width="1"/>
<path d="M628.4,95.2 L635.4,96.2 L639.2,97.6 L631.4,100 Z" fill="#3f8fbe" stroke="#14507a" stroke-width=".8"/>
<path d="M631.6,100.2 L635,99.2 V103.4 L631.6,106.8 Z" fill="#3f8fbe"/>
<path d="M635,96.4 V103.4 L639,105 M635,103.4 L631.6,107.4" fill="none" stroke="#14507a" stroke-width=".8"/>
</g>
<!-- Wrap -->
<g>
<path d="M687.2,43 V54 C687.2,58.8 705,58.8 705,54 V43" fill="#f6f6f6" stroke="#3a3a3a" stroke-width="1.1"/>
<path d="M688.6,46.8 C692.4,48.6 699.8,48.6 703.6,46.8 V54 C699.8,56.2 692.4,56.2 688.6,54 Z" fill="#1c6496" stroke="#14507a" stroke-width=".8"/>
<path d="M690,48.2 C691.6,48.8 693.4,49.1 695,49.2 V51 H693 V52.8 H695 V55 C693.2,54.9 691.4,54.5 690,53.8 Z" fill="#7cc8ea"/>
<path d="M697.4,49.2 C698.4,49.1 699.4,49 700.2,48.8 V54.6 C699.4,54.8 698.4,54.9 697.4,55 Z" fill="#7cc8ea"/>
<path d="M701.4,48.6 L702.8,48 V53.6 L701.4,54.2 Z" fill="#5aa9d4"/>
<ellipse cx="696.1" cy="43" rx="8.9" ry="3.2" fill="#fcfcfc" stroke="#3a3a3a" stroke-width="1.1"/>
</g>
<!-- Intersect -->
<g stroke-linejoin="round">
<path d="M688.2,76 C693,73.4 700,74.4 705.1,71.3 V78.4 C699,81.4 693,79.6 688.2,83.8 Z" fill="#3f8fbe" stroke="#14507a" stroke-width="1"/>
<path d="M689,76.6 C693,74.6 699,75.4 704.4,72.6 V74.4 C699,77 693,76.2 689,78.6 Z" fill="#6fb7dc"/>
<path d="M691.4,68.9 L696.9,66.2 L703.1,68.5 V75.2 L696.9,78.4 L692.5,75.6 Z" fill="#fcfcfc" stroke="#3a3a3a" stroke-width="1.1"/>
<path d="M691.4,68.9 L696.9,71.4 V78.4 M696.9,71.4 L703.1,68.5" fill="none" stroke="#3a3a3a" stroke-width=".9"/>
<path d="M697.2,71.8 L702.8,69.2 V75 L697.2,77.8 Z" fill="#dedede"/>
</g>
<!-- Mirror -->
<g stroke-linejoin="miter">
<path d="M688.3,95.3 H691.8 V98.4 H694.8 V102.7 H691.8 V105.8 H688.3 Z" fill="#3f93c4" stroke="#14507a" stroke-width="1.1"/>
<path d="M689.2,96.2 H690.6 V104.8 H689.2 Z" fill="#8fd0ee"/>
<path d="M704.9,95.3 H701.5 V98.4 H698.5 V102.7 H701.5 V105.8 H704.9 Z" fill="#f8f8f8" stroke="#222" stroke-width="1.1"/>
<line x1="696.5" y1="92.1" x2="696.5" y2="109.8" stroke="#111" stroke-width="1.1"/>
</g>
<!-- Reference Geometry -->
<g>
<circle cx="792.6" cy="44.8" r="2.5" fill="#5aa9d4" stroke="#1c5f8c" stroke-width="1"/>
<path d="M797.4,47.2 L808,43.6 V56.2 L797.4,60 Z" fill="#5aa9d4" stroke="#1c5f8c" stroke-width="1" stroke-linejoin="round"/>
<path d="M798.4,48 L801.6,46.8 V57.6 L798.4,58.8 Z" fill="#a8d8ef"/>
<line x1="802.4" y1="42.6" x2="802.4" y2="60.6" stroke="#111" stroke-width="1.1" stroke-dasharray="2.2,1.4"/>
</g>
<!-- Curves -->
<path d="M843.2,43 C849.4,43 851.8,46.4 848.4,50.6 C844.4,55.6 845.4,59 850.6,59 C856.4,59 858.2,56.4 857,51.4 C856,47 856,43.8 860.8,43.6" fill="none" stroke="#2b7fa8" stroke-width="1.4" stroke-linecap="round"/>
<!-- Instant3D -->
<g stroke-linejoin="round">
<path d="M902,42.4 L916,48.4 V56.6 L902,50.6 Z" fill="#f2d21c" stroke="#8a7400" stroke-width=".8"/>
<path d="M904.4,44 V47 M907.2,45.2 V49.4 M910,46.4 V49.4 M912.8,47.6 V51.8" stroke="#5a4a00" stroke-width=".9"/>
<path d="M898.4,49.2 L900.4,47.2 L910.4,53 L912,50.6 L917,59.4 L906.4,58.8 L908.2,56.4 Z" fill="#2f7cab" stroke="#f4f4f4" stroke-width="1"/>
</g>

<!-- ===== heads-up view toolbar ===== -->
<!-- zoom to fit -->
<g>
<path d="M470.6,155.6 L472.2,157.2 L467.4,163 L465,160.6 Z" fill="#6ab0d4" stroke="#3a7fa6" stroke-width=".8" stroke-linejoin="round"/>
<path d="M470.6,157 L466.4,161.2" stroke="#a8d8ee" stroke-width="1.1" stroke-linecap="round"/>
<circle cx="476.4" cy="151.3" r="6.2" fill="#f1f5f8" stroke="#8a8f94" stroke-width="1.3"/>
<circle cx="476.4" cy="151.3" r="4.9" fill="none" stroke="#dfe6ea" stroke-width=".8"/>
<rect x="474.9" y="149.8" width="3" height="3" fill="#e1e8ee"/>
<g fill="#3f3f3f"><path d="M476.4,147 l1.7,1.9 h-3.4z"/><path d="M476.4,155.6 l1.7,-1.9 h-3.4z"/><path d="M472.1,151.3 l1.9,-1.7 v3.4z"/><path d="M480.7,151.3 l-1.9,-1.7 v3.4z"/></g>
</g>
<!-- zoom to area -->
<g>
<rect x="496.7" y="145.6" width="11.8" height="11.6" fill="none" stroke="#3f3f3f" stroke-width="1" stroke-dasharray="2.2,1.5"/>
<path d="M495.2,157.4 L496.8,159 L492.4,164.2 L490,161.8 Z" fill="#6ab0d4" stroke="#3a7fa6" stroke-width=".8" stroke-linejoin="round"/>
<path d="M495.2,158.6 L491.4,162.4" stroke="#a8d8ee" stroke-width="1.1" stroke-linecap="round"/>
<circle cx="500.4" cy="153.3" r="6.2" fill="url(#gLens)" stroke="#8a8f94" stroke-width="1.3"/>
</g>
<!-- previous view -->
<g stroke-linejoin="round">
<path d="M517.4,156.4 L524.6,150.6 L529.4,146.6 L532.6,145 L535.2,147.6 L533.4,150.6 L529.4,154.6 L524.6,161.8 C521.6,163.4 516.8,160 517.4,156.4 Z" fill="url(#gPaper)" stroke="#8c8c8c" stroke-width="1"/>
<path d="M524.6,150.6 L529.6,155 M529.4,146.6 L533.4,150.6" fill="none" stroke="#9a9a9a" stroke-width=".8"/>
<ellipse cx="520.8" cy="159" rx="2.1" ry="3.4" transform="rotate(-48 520.8 159)" fill="#f4f4f4" stroke="#8c8c8c" stroke-width=".9"/>
<ellipse cx="520.8" cy="159" rx="1" ry="2.2" transform="rotate(-48 520.8 159)" fill="none" stroke="#b4b4b4" stroke-width=".7"/>
<path d="M525.4,158.4 L529.6,155 V157 H534.8 V159.8 H529.6 V161.8 Z" fill="#4a94c0"/>
</g>
<!-- section view -->
<g stroke-linejoin="round">
<path d="M543.3,151.6 C543.3,144.2 561.1,143.6 561.1,149.4 V158.6 L556.4,159.8 V149.6 C555.4,147.8 551.6,148 550.5,150.6 V161.2 L544.3,162.8 L543.3,161.4 Z" fill="#f6f6f6" stroke="#7a7a7a" stroke-width="1"/>
<path d="M550.5,150.6 C551.6,148 555.4,147.8 556.4,149.6 V156.6 C554.8,155.4 552,155.6 550.5,157.2 Z" fill="url(#gCav)"/>
<path d="M543.9,151.9 L550.4,151 V161 L544.4,162.6 Z" fill="#8fd0ee" stroke="#2a78a8" stroke-width=".8"/>
<path d="M556.2,149.6 L560.7,149.2 V158.4 L556.5,159.5 Z" fill="#8fd0ee" stroke="#2a78a8" stroke-width=".8"/>
<path d="M544.4,156.4 L550,152.2 M544.4,159.6 L550,155.4 M545.2,162 L550,158.6 M556.6,153.6 L560.4,150.6 M556.6,156.8 L560.4,153.8 M557,159 L560.4,156.8" stroke="#2a78a8" stroke-width=".8" fill="none"/>
</g>
<!-- view orientation -->
<g stroke-linejoin="round">
<path d="M569.2,150 L574.6,145 H586.6 V157 L581.4,162.4 H569.2 Z" fill="#fbfbfb" stroke="#4a4a4a" stroke-width="1"/>
<path d="M574.6,145 V157 H586.6 M574.6,157 L569.2,162.4" fill="none" stroke="#8a8a8a" stroke-width=".8"/>
<rect x="569.2" y="150" width="12.2" height="12.4" fill="#7dc3e6" stroke="#1c5f8c" stroke-width="1"/>
<path d="M581.4,150 L586.6,145" stroke="#4a4a4a" stroke-width="1"/>
<path d="M580.4,145.6 V149.2 M582.4,154.4 H586" stroke="#333" stroke-width="1"/>
</g>
<!-- display style -->
<g stroke-linejoin="round">
<path d="M610.3,146.6 L619.3,144.3 L626.7,147.8 V159.1 L615.4,163 L610.3,158.8 Z" fill="#fafafa" stroke="#6a6a6a" stroke-width="1.1"/>
<path d="M610.6,147.1 L615.2,150.4 V162.5 L610.6,158.6 Z" fill="url(#gBlueV)"/>
<path d="M610.6,146.9 L619.2,144.7 L621.6,145.8 L615.4,150.2 Z" fill="#a8d8ef"/>
<path d="M615.6,150.5 L621,148.8 V161 L615.6,162.7 Z" fill="#a8d8ef"/>
<path d="M621,148.8 L626.4,148.2 V158.9 L621,161 Z" fill="#f4f4f4"/>
<path d="M610.3,146.6 L615.4,150.2 V163 M615.4,150.2 L626.7,147.8" fill="none" stroke="#6a6a6a" stroke-width=".9"/>
</g>
<!-- hide/show (eye) -->
<g>
<path d="M649.4,153.4 C653.4,146.6 663.4,146.6 667.4,153.4 C663.4,160.2 653.4,160.2 649.4,153.4 Z" fill="#efefef" stroke="#c2c2c2" stroke-width="1"/>
<circle cx="658.4" cy="153.2" r="4.4" fill="#a4a4a4"/><circle cx="658.4" cy="153.2" r="2.2" fill="#6e6e6e"/>
<line x1="658.4" y1="147" x2="658.4" y2="161.6" stroke="#7a7a7a" stroke-width="1"/>
</g>
<!-- edit appearance -->
<g>
<circle cx="696.6" cy="152" r="7.6" fill="#e8e8e8"/>
<path d="M696.6,152 V144.4 A7.6,7.6 0 0 0 689,152 Z" fill="#3f7fd0"/>
<path d="M696.6,152 H704.2 A7.6,7.6 0 0 0 696.6,144.4 Z" fill="#d8362c"/>
<path d="M696.6,152 H689 A7.6,7.6 0 0 0 696.6,159.6 Z" fill="#2f9e3a"/>
<path d="M696.6,152 V159.6 A7.6,7.6 0 0 0 704.2,152 Z" fill="#e8b82a"/>
<circle cx="696.6" cy="152" r="7.6" fill="url(#gGloss)"/>
<path d="M698.4,161.6 L699.6,157.4 L705.6,151.4 L708.4,154.2 L702.4,160.2 Z" fill="#f0c02a" stroke="#5a4a1a" stroke-width=".9" stroke-linejoin="round"/>
<path d="M705.6,151.4 L707,150 L709.8,152.8 L708.4,154.2 Z" fill="#e8584a" stroke="#5a2a1a" stroke-width=".7"/>
<path d="M698.4,161.6 L699.2,159 L701,160.8 Z" fill="#333"/>
</g>
<!-- apply scene -->
<g>
<rect x="714.6" y="152.6" width="18" height="10.8" fill="#3a3a3a"/>
<g fill="#e9e9e9"><rect x="716.6" y="154.6" width="3" height="2.6"/><rect x="722.6" y="154.6" width="3" height="2.6"/><rect x="728.2" y="154.6" width="3" height="2.6"/><rect x="719.4" y="158.6" width="3" height="2.8"/><rect x="725.6" y="158.6" width="3" height="2.8"/><rect x="715" y="159" width="2" height="2.6"/></g>
<circle cx="723.4" cy="151.4" r="7.4" fill="#e8e8e8"/>
<path d="M723.4,151.4 V144 A7.4,7.4 0 0 0 716,151.4 Z" fill="#3f7fd0"/>
<path d="M723.4,151.4 H730.8 A7.4,7.4 0 0 0 723.4,144 Z" fill="#d8362c"/>
<path d="M723.4,151.4 H716 A7.4,7.4 0 0 0 723.4,158.8 Z" fill="#2f9e3a"/>
<path d="M723.4,151.4 V158.8 A7.4,7.4 0 0 0 730.8,151.4 Z" fill="#e8b82a"/>
<circle cx="723.4" cy="151.4" r="7.4" fill="url(#gGloss)"/>
</g>
<!-- view settings (monitor) -->
<g>
<rect x="755.6" y="146.6" width="16.8" height="10.8" fill="#dcdcdc" stroke="#5a5a5a" stroke-width="1.3"/>
<rect x="763" y="157.8" width="2" height="2.6" fill="#5a5a5a"/><rect x="759.6" y="160.2" width="8.8" height="1.5" fill="#4a4a4a"/>
</g>
<!-- realview sphere (disabled) -->
<circle cx="804.2" cy="152.6" r="7.6" fill="url(#gSphere)"/>
<!-- ===== task pane ===== -->
<circle cx="1267.1" cy="179.9" r="9.4" fill="url(#gCompass)" stroke="#0d3f63" stroke-width=".6"/>
<g fill="none" stroke="#9fd0ea" stroke-width=".9"><path d="M1265.4,177 L1270,179.9 L1265.4,182.8 Z"/><circle cx="1267.1" cy="179.9" r="6.2" stroke-dasharray="3,2.2" opacity=".8"/></g>
<g>
<path d="M1260.4,204 V211.8 H1273.8 V204 L1267.1,198.2 Z" fill="#fafafa" stroke="#2a2a2a" stroke-width="1.2"/>
<path d="M1265,211.6 V206.4 H1269 V211.6" fill="#fff" stroke="#2a2a2a" stroke-width="1.1"/>
<path d="M1258.6,204 L1267.1,196.4 L1275.6,204" fill="none" stroke="#1f5f8c" stroke-width="2.1"/>
</g>
<g stroke="#2a2a2a" stroke-width="1" stroke-linejoin="round" fill="#f6f6f6">
<path d="M1260.4,222 L1263.4,220.4 L1273.6,223.6 V233.6 L1265,236 L1260.4,233.4 Z"/>
<path d="M1260.4,222 L1265,224.6 V236 M1265,224.6 L1267.6,223 V234.8 M1267.6,223 L1263.4,220.4 M1267.6,226 L1270.4,224.4 V234.4 M1270.4,224.4 L1266.6,219.4 M1270.4,226 L1273.6,223.6 L1269.4,218.6" fill="none"/>
</g>
<g stroke="#3a3a3a" stroke-width="1.1" stroke-linejoin="round">
<path d="M1258,245 H1262.8 L1264.2,246.8 H1272.4 V259.8 H1258 Z" fill="#cfcfcf"/>
<path d="M1262,250.4 H1276.4 L1272.2,259.9 H1258.2 Z" fill="#f8f8f8"/>
</g>
<g>
<rect x="1258.6" y="268.4" width="16.8" height="15" rx="1.6" fill="#fafafa" stroke="#2a2a2a" stroke-width="1.2"/>
<g fill="#f2c61e" stroke="#8a6a00" stroke-width=".7"><rect x="1260.6" y="270.6" width="7.6" height="2.6"/><rect x="1270.4" y="270.6" width="3" height="2.6"/><path d="M1263.4,275.4 H1265.6 V278 H1268.6 V280.6 H1260.4 V278 H1263.4 Z"/></g>
<rect x="1271.2" y="276.4" width="2.6" height="5.6" fill="#dcdcdc" stroke="#8a8a8a" stroke-width=".6"/>
</g>
<g>
<circle cx="1267" cy="299" r="7.8" fill="#e8e8e8"/>
<path d="M1267,299 L1264,291.8 A7.8,7.8 0 0 0 1259.2,299.6 Z" fill="#3f7fd0"/>
<path d="M1267,299 L1274.6,297 A7.8,7.8 0 0 0 1264,291.8 Z" fill="#d8261c"/>
<path d="M1267,299 L1259.2,299.6 A7.8,7.8 0 0 0 1267.6,306.8 Z" fill="#2fa03a"/>
<path d="M1267,299 L1267.6,306.8 A7.8,7.8 0 0 0 1274.6,297 Z" fill="#e8b82a"/>
<circle cx="1267" cy="299" r="7.8" fill="url(#gGloss)"/>
</g>
<g>
<rect x="1258.6" y="315.8" width="16.8" height="16.4" rx="1.2" fill="#fafafa" stroke="#2a2a2a" stroke-width="1.2"/>
<rect x="1259.2" y="316.4" width="15.6" height="3" fill="#3f8fbe"/>
<g fill="#2f7cab"><rect x="1260.6" y="321.2" width="3.4" height="2.2"/><rect x="1260.6" y="325" width="3.4" height="2.2"/><rect x="1260.6" y="328.6" width="3.4" height="2.2"/></g>
<g stroke="#2a2a2a" stroke-width="1"><line x1="1265.6" y1="322.3" x2="1273.6" y2="322.3"/><line x1="1265.6" y1="326.1" x2="1273.6" y2="326.1"/><line x1="1265.6" y1="329.7" x2="1273.6" y2="329.7"/></g>
</g>
<g stroke-linejoin="round">
<path d="M1264.8,344 H1275.4 V351.4 H1269.6 L1266.6,354.4 V351.4 H1264.8 Z" fill="#f4f4f4" stroke="#3a3a3a" stroke-width="1"/>
<path d="M1258.6,340.2 H1269.8 V348.2 H1263.4 L1260.6,351 V348.2 H1258.6 Z" fill="#4a9bc9" stroke="#1c5f8c" stroke-width="1"/>
<path d="M1259.4,341 H1269 V344 H1259.4 Z" fill="#8fd0ee"/>
</g>
<!-- bottom nav buttons -->
<g fill="#8e8e8e">
<path d="M14.6,964 V972 L9,968 Z"/><rect x="7.4" y="964" width="1.4" height="8"/>
<path d="M29.6,964 V972 L23.6,968 Z"/>
<path d="M39.4,964 V972 L45.4,968 Z"/>
<path d="M54.4,964 V972 L60,968 Z"/><rect x="60.2" y="964" width="1.4" height="8"/>
</g>
<!-- status bar: units arrow + icon -->
<path d="M1228.6,987.2 L1231.3,984.4 L1234,987.2 Z" fill="#222"/>
<g stroke="#2a2a2a" stroke-width="1.1" stroke-linejoin="round">
<path d="M1261,984.4 L1270.6,979 L1279.4,984 V986.6 L1269.8,992 L1261,987.2 Z" fill="#e6e6e6"/>
<path d="M1261,984.4 L1269.8,989.2 L1279.4,984 M1269.8,989.2 V992" fill="none"/>
<ellipse cx="1268.4" cy="984" rx="1.8" ry="1.2" fill="#fff"/><path d="M1272,982.4 L1275,984 L1272.4,985.6" fill="none"/>
</g>

<!-- dropdown arrows -->
<path d="M499.8,16.2 H505.2 L502.5,19.1 Z" fill="#2e2e2e"/>
<path d="M543.6,16.2 H549.0 L546.3,19.1 Z" fill="#2e2e2e"/>
<path d="M587.8,16.2 H593.2 L590.5,19.1 Z" fill="#2e2e2e"/>
<path d="M631.8,16.2 H637.2 L634.5,19.1 Z" fill="#2e2e2e"/>
<path d="M763.8,16.2 H769.2 L766.5,19.1 Z" fill="#2e2e2e"/>
<path d="M867.3,16.2 H872.7 L870.0,19.1 Z" fill="#2e2e2e"/>
<path d="M675.6,16.2 H681.0 L678.3,19.1 Z" fill="#9d9d9d"/>
<path d="M719.3,16.2 H724.7 L722.0,19.1 Z" fill="#9d9d9d"/>
<path d="M1084.7,16.2 H1090.1 L1087.4,19.1 Z" fill="#8c8c8c"/>
<path d="M344.8,102.2 H350.2 L347.5,105.1 Z" fill="#3a3a3a"/>
<path d="M552.7,102.2 H558.1 L555.4,105.1 Z" fill="#3a3a3a"/>
<path d="M593.7,102.2 H599.1 L596.4,105.1 Z" fill="#3a3a3a"/>
<path d="M796.7,102.2 H802.1 L799.4,105.1 Z" fill="#3a3a3a"/>
<path d="M848.4,102.2 H853.8 L851.1,105.1 Z" fill="#3a3a3a"/>
<path d="M594.8,152.8 H600.2 L597.5,155.7 Z" fill="#9d9d9d"/>
<path d="M634.6,152.8 H640.0 L637.3,155.7 Z" fill="#9d9d9d"/>
<path d="M674.6,152.8 H680.0 L677.3,155.7 Z" fill="#9d9d9d"/>
<path d="M740.7,152.8 H746.1 L743.4,155.7 Z" fill="#9d9d9d"/>
<path d="M780.7,152.8 H786.1 L783.4,155.7 Z" fill="#9d9d9d"/>
</svg>
<span class="t" id="t0" style="left:142.43px;top:12.00px;font-size:11.50px;letter-spacing:-0.041px;;">File</span>
<span class="t" id="t1" style="left:176.69px;top:12.00px;font-size:11.50px;letter-spacing:0.231px;;">Edit</span>
<span class="t" id="t2" style="left:213.05px;top:12.00px;font-size:11.50px;letter-spacing:0.148px;;">View</span>
<span class="t" id="t3" style="left:253.17px;top:12.00px;font-size:11.50px;letter-spacing:0.201px;;">Insert</span>
<span class="t" id="t4" style="left:298.85px;top:12.00px;font-size:11.50px;letter-spacing:0.050px;;">Tools</span>
<span class="t" id="t5" style="left:341.95px;top:12.00px;font-size:11.50px;letter-spacing:0.675px;;">Window</span>
<span class="t" id="t6" style="left:882.59px;top:11.20px;font-size:11.50px;letter-spacing:0.162px;;">0...</span>
<span class="t" id="t7" style="left:29.80px;top:11.49px;font-size:11.40px;letter-spacing:0.000px;font-style:italic;font-weight:bold;color:#da291c;transform-origin:0 0;transform:scaleX(1.1720);">SOLID</span>
<span class="t" id="t8" style="left:69.65px;top:11.49px;font-size:11.40px;letter-spacing:-0.081px;font-style:italic;color:#da291c;">WORKS</span>
<span class="t" id="t9" style="left:930.14px;top:11.20px;font-size:11.50px;letter-spacing:-0.311px;color:#66667a;-webkit-text-stroke:0;">Search Commands</span>
<span class="t" id="t10" style="left:11.94px;top:61.20px;font-size:11.50px;letter-spacing:0.190px;;">Extruded</span>
<span class="t" id="t11" style="left:10.77px;top:73.80px;font-size:11.50px;letter-spacing:-0.580px;;">Boss/Base</span>
<span class="t" id="t12" style="left:72.18px;top:61.20px;font-size:11.50px;letter-spacing:-0.129px;;">Revolved</span>
<span class="t" id="t13" style="left:70.51px;top:73.80px;font-size:11.50px;letter-spacing:-0.549px;;">Boss/Base</span>
<span class="t" id="t14" style="left:273.43px;top:61.20px;font-size:11.50px;letter-spacing:0.132px;;">Extruded</span>
<span class="t" id="t15" style="left:287.94px;top:73.80px;font-size:11.50px;letter-spacing:0.108px;;">Cut</span>
<span class="t" id="t16" style="left:335.39px;top:61.20px;font-size:11.50px;letter-spacing:0.337px;;">Hole</span>
<span class="t" id="t17" style="left:329.79px;top:73.80px;font-size:11.50px;letter-spacing:0.095px;;">Wizard</span>
<span class="t" id="t18" style="left:375.77px;top:61.20px;font-size:11.50px;letter-spacing:-0.235px;;">Revolved</span>
<span class="t" id="t19" style="left:389.84px;top:73.80px;font-size:11.50px;letter-spacing:-0.027px;;">Cut</span>
<span class="t" id="t20" style="left:542.77px;top:61.20px;font-size:11.50px;letter-spacing:0.279px;;">Fillet</span>
<span class="t" id="t21" style="left:580.76px;top:61.20px;font-size:11.50px;letter-spacing:-0.075px;;">Linear</span>
<span class="t" id="t22" style="left:577.77px;top:73.80px;font-size:11.50px;letter-spacing:0.137px;;">Pattern</span>
<span class="t" id="t23" style="left:773.43px;top:61.20px;font-size:11.50px;letter-spacing:-0.148px;;">Reference</span>
<span class="t" id="t24" style="left:774.81px;top:73.80px;font-size:11.50px;letter-spacing:-0.285px;;">Geometry</span>
<span class="t" id="t25" style="left:834.88px;top:61.20px;font-size:11.50px;letter-spacing:-0.464px;;">Curves</span>
<span class="t" id="t26" style="left:881.17px;top:61.20px;font-size:11.50px;letter-spacing:0.216px;;">Instant3D</span>
<span class="t" id="t27" style="left:153.97px;top:41.80px;font-size:11.50px;letter-spacing:-0.389px;;">Swept Boss/Base</span>
<span class="t" id="t28" style="left:153.76px;top:68.00px;font-size:11.50px;letter-spacing:-0.277px;;">Lofted Boss/Base</span>
<span class="t" id="t29" style="left:153.77px;top:93.90px;font-size:11.50px;letter-spacing:-0.304px;;">Boundary Boss/Base</span>
<span class="t" id="t30" style="left:454.75px;top:41.80px;font-size:11.50px;letter-spacing:-0.059px;;">Swept Cut</span>
<span class="t" id="t31" style="left:454.67px;top:68.00px;font-size:11.50px;letter-spacing:0.115px;;">Lofted Cut</span>
<span class="t" id="t32" style="left:454.69px;top:93.90px;font-size:11.50px;letter-spacing:-0.008px;;">Boundary Cut</span>
<span class="t" id="t33" style="left:647.51px;top:41.80px;font-size:11.50px;letter-spacing:0.022px;;">Rib</span>
<span class="t" id="t34" style="left:647.47px;top:68.00px;font-size:11.50px;letter-spacing:0.332px;;">Draft</span>
<span class="t" id="t35" style="left:648.08px;top:93.90px;font-size:11.50px;letter-spacing:-0.161px;;">Shell</span>
<span class="t" id="t36" style="left:712.20px;top:41.80px;font-size:11.50px;letter-spacing:0.133px;;">Wrap</span>
<span class="t" id="t37" style="left:711.22px;top:68.00px;font-size:11.50px;letter-spacing:0.041px;;">Intersect</span>
<span class="t" id="t38" style="left:711.36px;top:93.90px;font-size:11.50px;letter-spacing:0.595px;;">Mirror</span>
<span class="t" id="t39" style="left:7.51px;top:120.73px;font-size:11.80px;letter-spacing:-0.021px;font-weight:bold;color:#2a2a30;-webkit-text-stroke:0;">Features</span>
<span class="t" id="t40" style="left:73.25px;top:120.55px;font-size:12.00px;letter-spacing:-0.174px;;">Sketch</span>
<span class="t" id="t41" style="left:127.35px;top:120.55px;font-size:12.00px;letter-spacing:-0.314px;;">Surfaces</span>
<span class="t" id="t42" style="left:187.18px;top:120.55px;font-size:12.00px;letter-spacing:-0.076px;;">Sheet Metal</span>
<span class="t" id="t43" style="left:266.01px;top:120.55px;font-size:12.00px;letter-spacing:0.063px;;">Weldments</span>
<span class="t" id="t44" style="left:341.31px;top:120.55px;font-size:12.00px;letter-spacing:0.200px;;">Mold Tools</span>
<span class="t" id="t45" style="left:415.56px;top:120.55px;font-size:12.00px;letter-spacing:0.271px;;">Markup</span>
<span class="t" id="t46" style="left:472.57px;top:120.55px;font-size:12.00px;letter-spacing:-0.264px;;">Evaluate</span>
<span class="t" id="t47" style="left:532.06px;top:120.55px;font-size:12.00px;letter-spacing:-0.030px;;">MBD Dimensions</span>
<span class="t" id="t48" style="left:639.25px;top:120.55px;font-size:12.00px;letter-spacing:-0.420px;;">SOLIDWORKS Add-Ins</span>
<span class="t" id="t49" style="left:772.10px;top:120.55px;font-size:12.00px;letter-spacing:-0.625px;;">SOLIDWORKS CAM</span>
<span class="t" id="t50" style="left:893.49px;top:120.55px;font-size:12.00px;letter-spacing:-0.579px;;">SOLIDWORKS CAM TBM</span>
<span class="t" id="t51" style="left:13.18px;top:943.83px;font-size:12.80px;letter-spacing:0.400px;font-weight:bold;color:#000;">*Isometric</span>
<span class="t" id="t52" style="left:78.80px;top:959.57px;font-size:12.20px;letter-spacing:0.229px;font-weight:bold;color:#000;">Model</span>
<span class="t" id="t53" style="left:132.66px;top:960.00px;font-size:11.50px;letter-spacing:0.338px;;">Motion Study 1</span>
<span class="t" id="t54" style="left:-0.02px;top:978.80px;font-size:11.50px;letter-spacing:-0.253px;;">SOLIDWORKS Premium 2025 SP5.0</span>
<span class="t" id="t55" style="left:985.94px;top:979.00px;font-size:11.50px;letter-spacing:0.256px;;">Editing Part</span>
<span class="t" id="t56" style="left:1173.66px;top:979.00px;font-size:11.50px;letter-spacing:0.358px;;">MMGS</span>
</body></html>
